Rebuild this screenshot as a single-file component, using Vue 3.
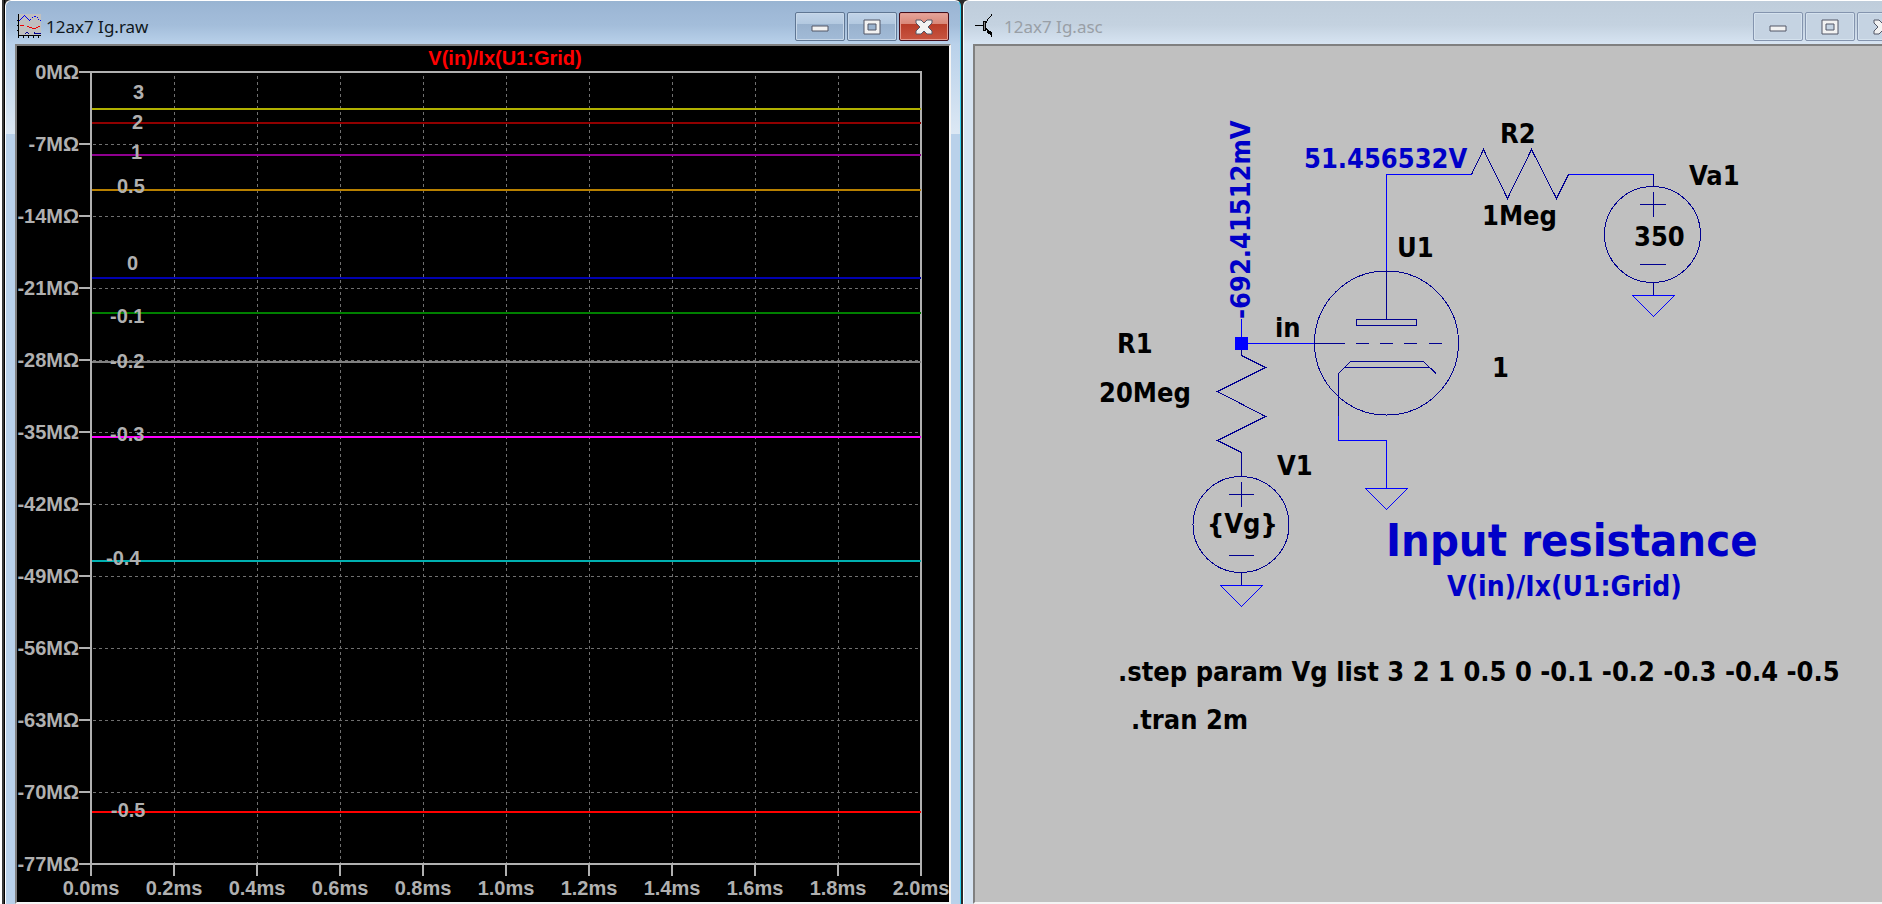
<template>
  <main class="desktop">
    <section class="window active">
      <header class="titlebar">
        <svg class="title-icon" viewBox="0 0 24 24" shape-rendering="crispEdges" aria-hidden="true">
          <rect x="1" y="0" width="23" height="22" fill="#c0c0c0" />
          <path d="M1.5 0V24M1 21.5H24M6.5 22v2M11.5 22v2M16.5 22v2M21.5 22v2M0 6.5h1M0 11.5h1M0 16.5h1" stroke="#000" fill="none" />
          <path d="M2 6.500h1M3 5.500h1M4 4.500h1M5 3.500h1M6 2.500h1M7 1.500h1M8 2.500h1M9 3.500h1M10 4.500h1M11 5.500h1M12 6.500h1M13 5.500h1M15 3.500h1M17 2.500h2M20 3.500h1M21 5.500h1M23 6.500h1" stroke="#0000f0" fill="none" />
          <path d="M3 11.500h4M10 12.500h2M12 13.500h3M15 14.500h4M19 13.500h2M21 12.500h2" stroke="#f00000" fill="none" />
          <path d="M9 18.500h2M8 19.500h1M11 19.500h1M17 18.500h1M17 19.500h7" stroke="#000090" fill="none" />
        </svg>
        <h1>12ax7 Ig.raw</h1>
        <div class="controls">
          <button
            v-for="control in controls"
            :key="control.name"
            type="button"
            :class="control.name"
            :aria-label="control.label"
          >
            <svg viewBox="0 0 20 18" aria-hidden="true"><path :d="control.path" /></svg>
          </button>
        </div>
      </header>
      <div class="client plot">
        <svg viewBox="0 0 932 856" preserveAspectRatio="xMinYMin" role="img" aria-label="V(in)/Ix(U1:Grid)">
          <g class="grid">
            <line v-for="x in gridX" :key="x" :x1="x + 0.5" y1="30" :x2="x + 0.5" y2="818" />
            <line v-for="y in gridY" :key="y" x1="76" :y1="y + 0.5" x2="904" :y2="y + 0.5" />
          </g>
          <g class="axis">
            <rect x="74" y="26" width="830" height="792" />
            <line v-for="tick in yTicks" :key="tick.y" x1="62" :y1="tick.y" x2="74" :y2="tick.y" />
            <line v-for="tick in xTicks" :key="tick.x" :x1="tick.x" y1="818" :x2="tick.x" y2="830" />
          </g>
          <line
            v-for="trace in traces"
            :key="trace.label"
            class="trace"
            x1="75"
            :y1="trace.y"
            x2="904"
            :y2="trace.y"
            :stroke="trace.color"
          />
          <g class="plot-text">
            <text v-for="tick in yTicks" :key="tick.y" class="end" x="62" :y="tick.y + 7">{{ tick.label }}</text>
            <text v-for="tick in xTicks" :key="tick.x" class="middle" :x="tick.x" y="849">{{ tick.label }}</text>
            <text v-for="trace in traces" :key="trace.label" :x="trace.labelX" :y="trace.labelY">{{ trace.label }}</text>
            <text class="middle expression" x="488" y="19">V(in)/Ix(U1:Grid)</text>
          </g>
        </svg>
      </div>
    </section>

    <section class="window inactive">
      <header class="titlebar">
        <svg class="title-icon" viewBox="0 0 24 24" shape-rendering="crispEdges" aria-hidden="true">
          <path d="M0 11.500H8M11.500 7V9M12.500 5V7M13.500 4V5M14.500 3V4M15.500 2V3M16.500 0V2M11.500 14V16M12.500 15V17M13.500 16V18M16.500 18V23" stroke="#000" fill="none" />
          <path d="M8 7h3v10h-3z" fill="#000" />
          <path d="M9 8h1v8h-1z" fill="#888" />
          <path d="M12 17H16V21H15V20H13V19H12z" fill="#000" />
        </svg>
        <h1>12ax7 Ig.asc</h1>
        <div class="controls">
          <button
            v-for="control in controls"
            :key="control.name"
            type="button"
            :class="control.name"
            :aria-label="control.label"
          >
            <svg viewBox="0 0 20 18" aria-hidden="true"><path :d="control.path" /></svg>
          </button>
        </div>
      </header>
      <div class="client schematic">
        <svg viewBox="975 46 907 856" preserveAspectRatio="xMinYMin" role="img" aria-label="Input resistance schematic">
          <g class="wire">
            <path d="M1471.500 174.500H1386.500V270M1568.500 174.500H1653.500" />
            <path d="M1241.500 319V337M1248 343.500H1314" />
            <path d="M1338.500 416V440.500H1386.500V488.500" />
            <path v-for="g in grounds" :key="g.x" :d="`M${g.x - 21} ${g.y}H${g.x + 21}L${g.x} ${g.y + 21}Z`" />
            <rect class="node" x="1235" y="337" width="13" height="13" />
          </g>
          <g class="symbol">
            <!-- R2 -->
            <path d="M1471.500 174.500L1483.500 149.500L1507.500 198.500L1531.500 149.500L1556.500 198.500L1568.500 174.500" />
            <!-- R1 -->
            <path d="M1241.500 350V355.500L1265.500 367.500L1217.500 391.500L1265.500 416.500L1217.500 440.500L1241.500 452.500V476" />
            <!-- Va1 -->
            <path d="M1653.500 174V187M1653.500 283V295M1640 204.500H1666M1653.500 192V217M1640 264.500H1666" />
            <circle cx="1652.5" cy="234.5" r="48" />
            <!-- V1 -->
            <path d="M1241.500 573V585M1229 494.500H1254M1241.500 482V507M1229 555.500H1254" />
            <circle cx="1241" cy="524.5" r="48" />
            <!-- U1 -->
            <circle cx="1386.5" cy="343" r="72" />
            <path d="M1386.500 270V319M1356.500 319.500H1416.500V325.500H1356.500Z" />
            <path d="M1314 343.500H1345M1356 343.500H1369M1380 343.500H1393M1404 343.500H1417M1429 343.500H1442" />
            <path d="M1338.500 416V373.500L1350.500 361.500H1423.500L1436 373.500M1345 367.500H1429" />
          </g>
          <text
            v-for="note in labels"
            :key="note.text + note.y"
            :class="note.kind"
            :x="note.x"
            :y="note.y"
          >{{ note.text }}</text>
          <text class="net" transform="translate(1250 319) rotate(-90)">-692.41512mV</text>
        </svg>
      </div>
    </section>
  </main>
</template>

<script setup>
const controls = [
  { name: "minimize", label: "Minimize", path: "M2 8H18V13H2Z" },
  { name: "maximize", label: "Maximize", path: "M2 2H18V16H2ZM6 6V12H14V6Z" },
  {
    name: "close",
    label: "Close",
    path: "M2 2H7L10 5L13 2H18V5L14 9L18 13V16H13L10 13L7 16H2V13L6 9L2 5Z",
  },
];

// Axis ticks, evenly spaced over the plot area
const xTicks = Array.from({ length: 11 }, (_, i) => ({
  x: 74 + i * 83,
  label: `${(i * 0.2).toFixed(1)}ms`,
}));
const yTicks = Array.from({ length: 12 }, (_, i) => ({
  y: 26 + i * 72,
  label: i === 0 ? "0MΩ" : `-${i * 7}MΩ`,
}));
const gridX = xTicks.slice(1, -1).map((tick) => tick.x);
const gridY = yTicks.slice(1, -1).map((tick) => tick.y);

const traces = [
  { label: "3", y: 63, color: "#b0b000", labelX: 116, labelY: 53 },
  { label: "2", y: 77, color: "#900000", labelX: 115, labelY: 83 },
  { label: "1", y: 109, color: "#900090", labelX: 114, labelY: 113 },
  { label: "0.5", y: 144, color: "#b88000", labelX: 100, labelY: 147 },
  { label: "0", y: 232, color: "#0000b0", labelX: 110, labelY: 224 },
  { label: "-0.1", y: 267, color: "#008000", labelX: 93, labelY: 277 },
  { label: "-0.2", y: 316, color: "#808080", labelX: 93, labelY: 322 },
  { label: "-0.3", y: 391, color: "#ff00ff", labelX: 93, labelY: 395 },
  { label: "-0.4", y: 515, color: "#00b0b0", labelX: 89, labelY: 519 },
  { label: "-0.5", y: 766, color: "#ff0000", labelX: 94, labelY: 771 },
];

const grounds = [
  { x: 1653.5, y: 295.5 },
  { x: 1386.5, y: 488.5 },
  { x: 1241.5, y: 585.5 },
];

const labels = [
  { text: "51.456532V", x: 1304, y: 168, kind: "net" },
  { text: "R2", x: 1500, y: 143, kind: "part" },
  { text: "1Meg", x: 1482, y: 225, kind: "part" },
  { text: "Va1", x: 1689, y: 185, kind: "part" },
  { text: "350", x: 1634, y: 246, kind: "part" },
  { text: "U1", x: 1397, y: 257, kind: "part" },
  { text: "in", x: 1275, y: 337, kind: "part" },
  { text: "1", x: 1492, y: 377, kind: "part" },
  { text: "R1", x: 1117, y: 353, kind: "part" },
  { text: "20Meg", x: 1099, y: 402, kind: "part" },
  { text: "V1", x: 1277, y: 475, kind: "part" },
  { text: "{Vg}", x: 1207, y: 533, kind: "part" },
  { text: "Input resistance", x: 1386, y: 556, kind: "heading" },
  { text: "V(in)/Ix(U1:Grid)", x: 1447, y: 596, kind: "subheading" },
  { text: ".step param Vg list 3 2 1 0.5 0 -0.1 -0.2 -0.3 -0.4 -0.5", x: 1118, y: 681, kind: "part" },
  { text: ".tran 2m", x: 1131, y: 729, kind: "part" },
];
</script>

<style>
body {
  margin: 0;
  background: #ffffff;
}
</style>

<style scoped>
.desktop {
  display: grid;
  grid-template-columns: 956fr 919fr;
  gap: 2px;
  height: 100vh;
  box-sizing: border-box;
  padding-left: 5px;
  overflow: hidden;
  background: linear-gradient(to right, #ffffff 2px, #383838 2px, #383838 4px, #000000 4px, #000000 5px, #2a2a2a 5px);
}

.window {
  display: flex;
  flex-direction: column;
  box-sizing: border-box;
  min-width: 0;
  min-height: 0;
  overflow: hidden;
  border-top: 1px solid #ffffff;
  border-left: 1px solid #ffffff;
  border-top-left-radius: 6px;
  padding: 0 9px;
}

.active {
  border-right: 1px solid #30d0f0;
  border-top-right-radius: 6px;
  background: linear-gradient(to bottom, #98b4d2 0, #9fb9d7 12px, #a3bdda 24px, #b9d1ea 43px, #dce8f4 133px, #b9d1ea 133px);
}

.inactive {
  padding-right: 0;
  background: linear-gradient(to bottom, #bfcddb 0, #c4d2e0 24px, #d7e4f2 43px);
}

.titlebar {
  display: flex;
  flex: none;
  align-items: flex-start;
  height: 43px;
}

.inactive .titlebar {
  margin-right: -25px;
}

.title-icon {
  width: 24px;
  height: 24px;
  margin: 13px 5px 0 2px;
}

.titlebar h1 {
  flex: 1;
  margin: 0;
  padding-top: 14px;
  font: 400 17px/24px "Noto Sans", "Open Sans", sans-serif;
  color: #101820;
}

.inactive .titlebar h1 {
  color: #999fa6;
}

.controls {
  display: flex;
  gap: 2px;
  padding-top: 11px;
  padding-right: 2px;
}

.inactive .controls {
  padding-right: 0;
}

.controls button {
  display: flex;
  align-items: center;
  justify-content: center;
  width: 50px;
  height: 29px;
  padding: 0;
  border: 1px solid #5f7693;
  border-radius: 2px;
  box-shadow: inset 0 0 0 1px #c8d8e9;
  background: linear-gradient(to bottom, #c1d3e8 0, #b3c9e0 40%, #98b1cd 40%, #a2bbd7 100%);
}

.inactive .controls button {
  border-color: #8494ae;
  box-shadow: inset 0 0 0 1px #d5e2ee;
  background: #c5d3e2;
}

.active .controls .close {
  border-color: #430e1b;
  box-shadow: inset 0 0 0 1px #e39b90;
  background: linear-gradient(to bottom, #e5a59b 0, #d98879 40%, #b83c28 40%, #c85541 100%);
}

.controls svg {
  width: 20px;
  height: 18px;
}

.controls path {
  fill: #f2f2f2;
  fill-rule: evenodd;
  stroke: #535666;
  stroke-linejoin: round;
}

.client {
  flex: 1;
  min-height: 0;
  border: 2px solid;
  border-color: #808080 #f4f4f4 #f4f4f4 #808080;
}

.client svg {
  display: block;
  width: 100%;
  height: 100%;
}

.plot {
  background: #000000;
}

.schematic {
  border-right: 0;
  background: #c0c0c0;
}

.grid line,
.axis,
.trace,
.wire,
.symbol {
  shape-rendering: crispEdges;
}

.grid line {
  stroke: #707070;
  stroke-dasharray: 3 3;
}

.axis {
  fill: none;
  stroke: #b0b0b0;
  stroke-width: 2;
}

.trace {
  stroke-width: 2;
}

.plot-text {
  font: 700 20px "Liberation Sans", Arial, sans-serif;
  fill: #b0b0b0;
}

.end {
  text-anchor: end;
}

.middle {
  text-anchor: middle;
}

.expression {
  fill: #ff0000;
}

.wire {
  fill: none;
  stroke: #0000ff;
}

.node {
  fill: #0000ff;
  stroke: none;
}

.symbol {
  fill: none;
  stroke: #000090;
}

.schematic text {
  font: 700 27px "DejaVu Sans Condensed", Tahoma, "DejaVu Sans", sans-serif;
}

.schematic .net,
.schematic .subheading,
.schematic .heading {
  fill: #0000c8;
}

.schematic .subheading {
  font-size: 28px;
}

.schematic .heading {
  font-size: 45px;
}
</style>
